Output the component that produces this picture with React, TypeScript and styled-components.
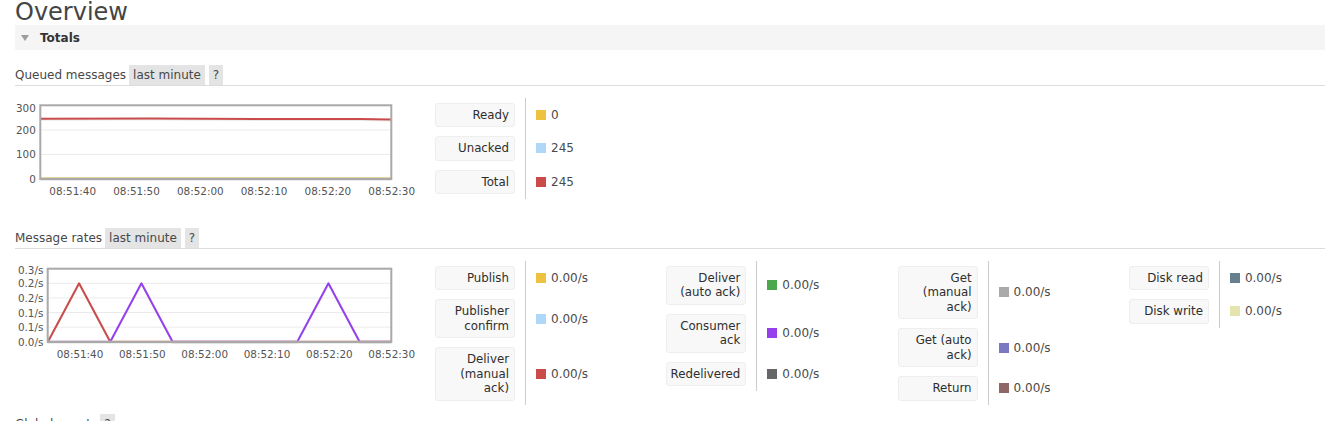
import React from "react";
import styled, { createGlobalStyle } from "styled-components";

const GlobalStyle = createGlobalStyle`
  html, body { margin: 0; padding: 0; background: #ffffff; }
  body {
    font-family: "DejaVu Sans", Verdana, sans-serif;
    font-size: 12px;
    color: #484848;
    overflow: hidden;
  }
`;

const Page = styled.main`
  padding-left: 15px;
  width: 1310px;
`;

const Title = styled.h1`
  margin: 0;
  font-size: 24px;
  line-height: 24px;
  font-weight: normal;
  color: #444444;
`;

const SectionBar = styled.div`
  margin-top: 1px;
  height: 25px;
  display: flex;
  align-items: center;
  background: #f5f5f5;
  font-weight: bold;
  color: #333333;
  font-size: 12px;
`;

const Caret = styled.span`
  width: 0;
  height: 0;
  margin-left: 6px;
  margin-right: 11px;
  border-left: 4.5px solid transparent;
  border-right: 4.5px solid transparent;
  border-top: 6px solid #9d9d9d;
`;

const SectionContent = styled.div`
  padding-top: 6px;
`;

const Header = styled.div`
  margin-top: 9px;
  display: flex;
  align-items: center;
  gap: 4px;
  height: 20px;
  border-bottom: 1px solid #dddddd;
  line-height: 14px;
`;

const HeaderTitle = styled.span`
  margin-right: -1px;
`;

const Badge = styled.span`
  background: #e4e4e4;
  padding: 3px 4px;
  color: #484848;
`;

const Body = styled.div`
  margin-top: 12px;
  display: flex;
  align-items: flex-start;
`;

const ChartBox = styled.div`
  width: 420px;
  height: 121px;
  flex: none;
`;

const Legend = styled.div`
  width: 231.3px;
  flex: none;
  display: grid;
  grid-template-columns: 90px auto;
  align-content: start;
`;

const LabelCell = styled.div`
  padding: 4.5px 10px 4.5px 0;
  display: flex;
`;

const LabelBox = styled.div`
  box-sizing: border-box;
  width: 80px;
  padding: 4px 5px 4px 3px;
  background: #f8f8f8;
  border: 1px solid #eeeeee;
  border-radius: 3px;
  text-align: right;
  font-size: 11.8px;
  line-height: 14.5px;
  color: #2e2e2e;
`;

const ValueCell = styled.div`
  border-left: 1px solid #cccccc;
  padding-left: 10px;
  display: flex;
  align-items: center;
  gap: 5px;
  color: #4a4a4a;
`;

const Swatch = styled.span<{ $c: string }>`
  width: 10px;
  height: 10px;
  flex: none;
  background: ${(p) => p.$c};
`;

type Item = { label: string; value: string; color: string };

const LegendTable = ({ items }: { items: Item[] }) => (
  <Legend>
    {items.map((it) => (
      <React.Fragment key={it.label}>
        <LabelCell>
          <LabelBox>{it.label}</LabelBox>
        </LabelCell>
        <ValueCell>
          <Swatch $c={it.color} />
          <span>{it.value}</span>
        </ValueCell>
      </React.Fragment>
    ))}
  </Legend>
);

const AXIS = "#545454";
const GRID = "#ebebeb";
const FRAME = "#a9a9a9";

const Line = ({ pts, color }: { pts: [number, number][]; color: string }) => (
  <>
    <polyline
      points={pts.map(([x, y]) => `${x},${y + 1.2}`).join(" ")}
      fill="none"
      stroke="rgba(0,0,0,0.08)"
      strokeWidth={1.6}
      strokeLinejoin="round"
    />
    <polyline
      points={pts.map(([x, y]) => `${x},${y}`).join(" ")}
      fill="none"
      stroke={color}
      strokeWidth={2}
      strokeLinejoin="round"
    />
  </>
);

const QueuedChart = () => {
  const xl = ["08:51:40", "08:51:50", "08:52:00", "08:52:10", "08:52:20", "08:52:30"];
  const yl: [string, number][] = [
    ["300", 107.5],
    ["200", 130],
    ["100", 154.4],
    ["0", 179],
  ];
  return (
    <svg width={420} height={121} viewBox="15 98 420 121" fontFamily="'DejaVu Sans', Verdana, sans-serif">
      <line x1={40.3} x2={391.3} y1={130} y2={130} stroke={GRID} />
      <line x1={40.3} x2={391.3} y1={154.4} y2={154.4} stroke={GRID} />
      <Line pts={[[40.3, 178.6], [391.3, 178.6]]} color="#afd8f8" />
      <Line pts={[[40.3, 118.8], [150, 118.6], [260, 119], [360, 119], [391.3, 119.5]]} color="#cb4b4b" />
      <Line pts={[[40.3, 178.6], [391.3, 178.6]]} color="#edc240" />
      <rect x={40.3} y={105.3} width={351} height={73.7} fill="none" stroke={FRAME} strokeWidth={2} />
      {yl.map(([t, y]) => (
        <text key={t} x={35.8} y={y} fontSize={10.4} fill={AXIS} textAnchor="end" dominantBaseline="central">
          {t}
        </text>
      ))}
      {xl.map((t, i) => (
        <text key={t} x={72.7 + 63.8 * i} y={191} fontSize={10.4} fill={AXIS} textAnchor="middle" dominantBaseline="central">
          {t}
        </text>
      ))}
    </svg>
  );
};

const RatesChart = () => {
  const xl = ["08:51:40", "08:51:50", "08:52:00", "08:52:10", "08:52:20", "08:52:30"];
  const base = 340.7;
  const step = 14.6;
  const yl = ["0.0/s", "0.1/s", "0.1/s", "0.2/s", "0.2/s", "0.3/s"];
  const px = (i: number) => 47.9 + 31.17 * i;
  const peak = base - 4 * step;
  return (
    <svg width={420} height={121} viewBox="15 260 420 121" fontFamily="'DejaVu Sans', Verdana, sans-serif">
      {[1, 2, 3, 4].map((k) => (
        <line key={k} x1={47.7} x2={391.3} y1={base - step * k} y2={base - step * k} stroke={GRID} />
      ))}
      <Line pts={[[px(0), base], [px(1), peak], [px(2), base], [391.3, base]]} color="#cb4b4b" />
      <Line
        pts={[
          [47.7, base],
          [px(2), base],
          [px(3), peak],
          [px(4), base],
          [px(8), base],
          [px(9), peak],
          [px(10), base],
          [391.3, base],
        ]}
        color="#9440ed"
      />
      <polyline points={`47.7,${base} 391.3,${base}`} fill="none" stroke="#e5e4ae" strokeWidth={2} />
      <rect x={47.7} y={267.7} width={343.6} height={73.3} fill="none" stroke={FRAME} strokeWidth={2} />
      {yl.map((t, k) => (
        <text
          key={k}
          x={43.4}
          y={k === 5 ? 268.8 : base - step * k}
          fontSize={10.4}
          fill={AXIS}
          textAnchor="end"
          dominantBaseline="central"
        >
          {t}
        </text>
      ))}
      {xl.map((t, i) => (
        <text key={t} x={80 + 62.34 * i} y={353} fontSize={10.4} fill={AXIS} textAnchor="middle" dominantBaseline="central">
          {t}
        </text>
      ))}
    </svg>
  );
};

const queued: Item[] = [
  { label: "Ready", value: "0", color: "#edc240" },
  { label: "Unacked", value: "245", color: "#afd8f8" },
  { label: "Total", value: "245", color: "#cb4b4b" },
];

const rateCols: Item[][] = [
  [
    { label: "Publish", value: "0.00/s", color: "#edc240" },
    { label: "Publisher confirm", value: "0.00/s", color: "#afd8f8" },
    { label: "Deliver (manual ack)", value: "0.00/s", color: "#cb4b4b" },
  ],
  [
    { label: "Deliver (auto ack)", value: "0.00/s", color: "#4da74d" },
    { label: "Consumer ack", value: "0.00/s", color: "#9440ed" },
    { label: "Redelivered", value: "0.00/s", color: "#666666" },
  ],
  [
    { label: "Get (manual ack)", value: "0.00/s", color: "#aaaaaa" },
    { label: "Get (auto ack)", value: "0.00/s", color: "#7c79c3" },
    { label: "Return", value: "0.00/s", color: "#8e6767" },
  ],
  [
    { label: "Disk read", value: "0.00/s", color: "#67808e" },
    { label: "Disk write", value: "0.00/s", color: "#e5e4ae" },
  ],
];

export default function App() {
  return (
    <>
      <GlobalStyle />
      <Page>
        <Title>Overview</Title>
        <SectionBar>
          <Caret />
          Totals
        </SectionBar>
        <SectionContent>
          <Header>
            <HeaderTitle>Queued messages</HeaderTitle>
            <Badge>last minute</Badge>
            <Badge>?</Badge>
          </Header>
          <Body>
            <ChartBox>
              <QueuedChart />
            </ChartBox>
            <LegendTable items={queued} />
          </Body>
          <Header>
            <HeaderTitle>Message rates</HeaderTitle>
            <Badge>last minute</Badge>
            <Badge>?</Badge>
          </Header>
          <Body>
            <ChartBox>
              <RatesChart />
            </ChartBox>
            {rateCols.map((col, i) => (
              <LegendTable key={i} items={col} />
            ))}
          </Body>
          <Header>
            <HeaderTitle>Global counts</HeaderTitle>
            <Badge>?</Badge>
          </Header>
        </SectionContent>
      </Page>
    </>
  );
}
